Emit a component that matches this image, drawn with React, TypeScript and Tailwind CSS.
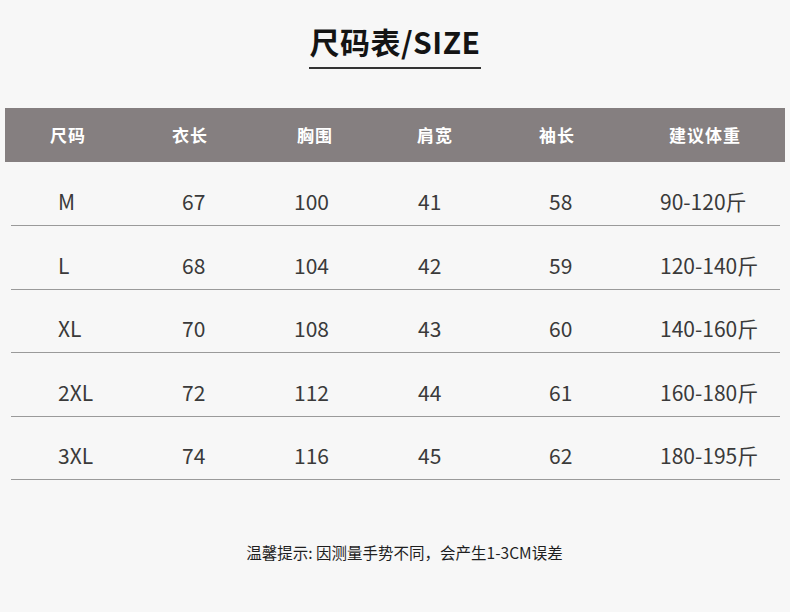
const headers = ["尺码", "衣长", "胸围", "肩宽", "袖长", "建议体重"];

const rows = [
  ["M", "67", "100", "41", "58", "90-120斤"],
  ["L", "68", "104", "42", "59", "120-140斤"],
  ["XL", "70", "108", "43", "60", "140-160斤"],
  ["2XL", "72", "112", "44", "61", "160-180斤"],
  ["3XL", "74", "116", "45", "62", "180-195斤"],
];

const font = { fontFamily: "'Noto Sans CJK SC', 'Noto Sans', sans-serif" };

export default function App() {
  return (
    <div className="w-[790px] h-[612px] bg-[#f7f7f7] flex flex-col overflow-hidden" style={font}>
      {/* title */}
      <div className="pt-[21px] flex flex-col items-center">
        <h1 className="text-[30px] leading-[40px] font-bold text-[#141414] tracking-[0.5px]">尺码表/SIZE</h1>
        <div className="mt-[6px] h-[2px] w-[172px] bg-[#333]" />
      </div>

      {/* table header */}
      <div className="mt-[39px] mx-[5px] h-[54px] bg-[#857f80] grid grid-cols-[126px_118px_132px_108px_136px_160px] items-center">
        {headers.map((h) => (
          <div key={h} className="text-center text-white font-bold text-[17px] leading-[24px] tracking-[1px] -mt-[1px]">
            {h}
          </div>
        ))}
      </div>

      {/* rows */}
      <div className="ml-[11px] w-[769px]">
        {rows.map((r, i) => (
          <div
            key={r[0]}
            className={`${i === 0 ? "h-[64px]" : "h-[63.5px]"} border-b border-[#9a9a9a] flex items-end pb-[12px]`}
          >
            <div className="pl-[47px] grid grid-cols-[124px_112px_124px_131px_111px_1fr] w-full">
              {r.map((c, j) => (
                <div key={j} className="text-[21px] leading-[24px] text-[#3a3a3a] font-normal">
                  {c}
                </div>
              ))}
            </div>
          </div>
        ))}
      </div>

      {/* footer note */}
      <div className="mt-[62px] pl-[19px] text-center text-[15.5px] leading-[20px] text-[#1f1f1f]">
        温馨提示: 因测量手势不同，会产生1-3CM误差
      </div>
    </div>
  );
}
